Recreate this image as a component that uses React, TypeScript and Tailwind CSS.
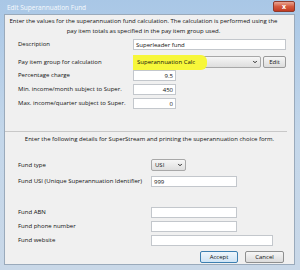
import {ChevronDown} from "lucide-react";

function Field({label, children, labelWidth, className}: {label: string, children: React.ReactNode, labelWidth: string, className?: string}) {
    return (
        <div className={`flex flex-row items-center pl-[13px] ${className ?? ""}`}>
            <span className={`${labelWidth} shrink-0`}>{label}</span>
            {children}
        </div>
    );
}

function TextBox({value, width, right}: {value?: string, width: string, right?: boolean}) {
    return (
        <div className={`${width} h-[11px] bg-white border border-[#c3c7cc] flex items-center px-[2px] ${right ? "justify-end" : ""}`}>
            <span className="leading-none">{value}</span>
        </div>
    );
}

export default function App() {
    return (
        <div className="w-[300px] h-[270px] bg-gradient-to-b from-[#a9c7e6] via-[#c4d7ea] to-[#c9d8e8] flex flex-col font-['Open_Sans','Liberation_Sans',sans-serif] text-[6px] text-[#111]">
            <div className="h-[14px] shrink-0 flex flex-row items-start justify-between pl-[7px] pr-[5px]">
                <span className="text-white/90 text-[6.5px] mt-[5px] leading-none">Edit Superannuation Fund</span>
                <div className="w-[22px] h-[11px] mt-[1px] rounded-[2px] bg-gradient-to-b from-[#e8a493] via-[#d45a3e] to-[#c23a22] border border-[#8d3a2c] flex items-center justify-center text-white text-[7px] font-bold leading-none">x</div>
            </div>
            <div className="flex-1 ml-[4px] mr-[5px] mb-[5px] bg-[#f0f0f0] border border-[#9aaabb] flex flex-col">
                <p className="mt-[1px] pl-[4px] pr-[16px] text-center leading-[10px]">
                    Enter the values for the superannuation fund calculation. The calculation is performed using the<br />
                    pay item totals as specified in the pay item group used.
                </p>

                <Field label="Description" labelWidth="w-[115px]" className="mt-[3px]">
                    <TextBox value="Superleader fund" width="w-[153px]" />
                </Field>
                <Field label="Pay item group for calculation" labelWidth="w-[115px]" className="mt-[6px]">
                    <div className="relative w-[128px] h-[12px] bg-gradient-to-b from-[#f6f6f6] to-[#dedede] border border-[#a8a8a8] rounded-[2px] flex items-center">
                        <div className="absolute left-[-1px] top-[-2px] w-[74px] h-[15px] bg-[#f7f73a] rounded-r-[6px]"></div>
                        <span className="relative pl-[3px] leading-none">Superannuation Calc</span>
                        <ChevronDown className="absolute right-[2px] w-[6px] h-[6px] text-[#222]" strokeWidth={4} />
                    </div>
                    <div className="ml-[2px] w-[23px] h-[12px] bg-gradient-to-b from-[#f6f6f6] to-[#dcdcdc] border border-[#9a9a9a] rounded-[2px] flex items-center justify-center leading-none">Edit</div>
                </Field>
                <Field label="Percentage charge" labelWidth="w-[115px]" className="mt-[2px]">
                    <TextBox value="9.5" width="w-[43px]" right />
                </Field>
                <Field label="Min. income/month subject to Super." labelWidth="w-[115px]" className="mt-[3px]">
                    <TextBox value="450" width="w-[43px]" right />
                </Field>
                <Field label="Max. income/quarter subject to Super." labelWidth="w-[115px]" className="mt-[3px]">
                    <TextBox value="0" width="w-[43px]" right />
                </Field>

                <div className="mt-[22px] mr-[7px] h-px bg-[#c8c8c8]"></div>
                <p className="mt-[3px] text-center leading-[8px]">Enter the following details for SuperStream and printing the superannuation choice form.</p>

                <Field label="Fund type" labelWidth="w-[133px]" className="mt-[16px]">
                    <div className="relative w-[35px] h-[12px] bg-gradient-to-b from-[#f6f6f6] to-[#dedede] border border-[#a8a8a8] rounded-[2px] flex items-center">
                        <span className="pl-[3px] leading-none">USI</span>
                        <ChevronDown className="absolute right-[2px] w-[6px] h-[6px] text-[#222]" strokeWidth={4} />
                    </div>
                </Field>
                <Field label="Fund USI (Unique Superannuation Identifier)" labelWidth="w-[133px]" className="mt-[5px]">
                    <TextBox value="999" width="w-[86px]" />
                </Field>
                <Field label="Fund ABN" labelWidth="w-[133px]" className="mt-[20px]">
                    <TextBox width="w-[86px]" />
                </Field>
                <Field label="Fund phone number" labelWidth="w-[133px]" className="mt-[3px]">
                    <TextBox width="w-[86px]" />
                </Field>
                <Field label="Fund website" labelWidth="w-[133px]" className="mt-[3px]">
                    <TextBox width="w-[122px]" />
                </Field>

                <div className="mt-[5px] flex flex-row justify-end gap-[7px] pr-[10px]">
                    <div className="w-[38px] h-[12px] bg-gradient-to-b from-[#eef6fc] to-[#cfe4f5] border border-[#3c7fb1] rounded-[2px] flex items-center justify-center leading-none">Accept</div>
                    <div className="w-[39px] h-[12px] bg-gradient-to-b from-[#f6f6f6] to-[#dcdcdc] border border-[#8e8f8f] rounded-[2px] flex items-center justify-center leading-none">Cancel</div>
                </div>
            </div>
        </div>
    );
}
